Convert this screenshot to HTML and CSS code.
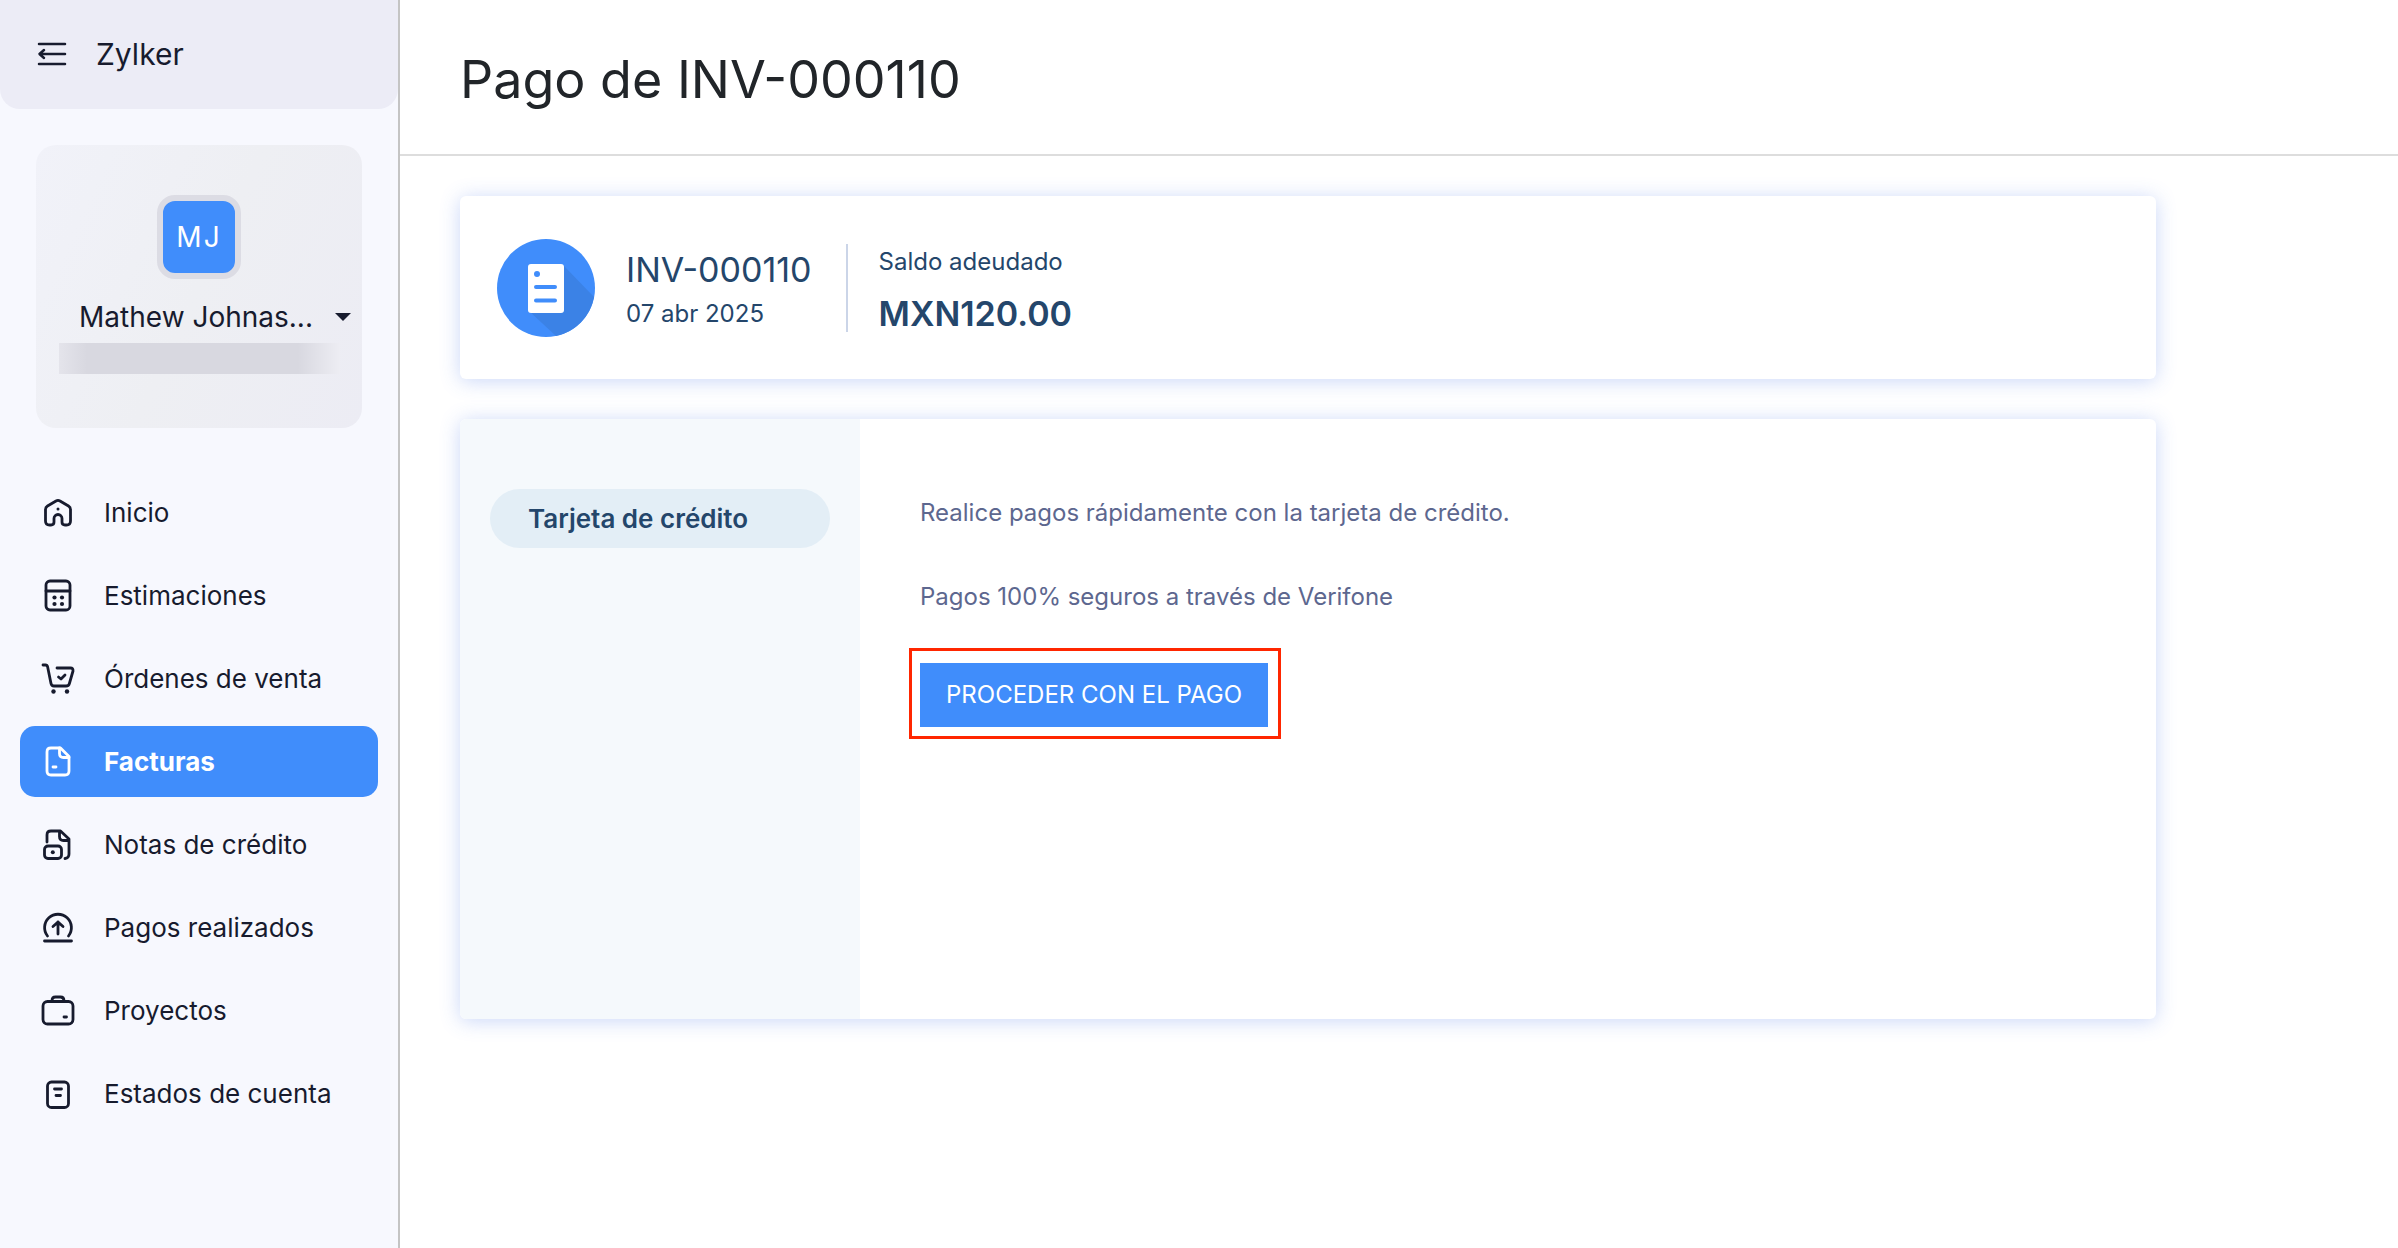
FILE: index.html
```html
<!DOCTYPE html>
<html lang="es">
<head>
    <meta charset="UTF-8">
    <meta name="viewport" content="width=device-width, initial-scale=1.0">
    <title>Pago de INV-000110</title>
    <link rel="stylesheet" href="styles.css">
</head>
<body>
<div id="app">
    <aside id="sidebar">
        <div class="brand">
            <button class="collapse" type="button" aria-label="Contraer menú">
                <svg width="30" height="26" viewBox="0 0 30 26">
                    <path d="M2 3h26M3 13h25M2 23h26M7 9l-4.500 4 4.500 4"/>
                </svg>
            </button>
            <span class="brand-name">Zylker</span>
        </div>

        <div class="profile">
            <div class="avatar">MJ</div>
            <button class="user" type="button">
                <span class="user-name">Mathew Johnas...</span>
                <span class="caret"></span>
            </button>
            <div class="user-mail"></div>
        </div>

        <nav class="menu">
            <a href="#">
                <svg class="icon" viewBox="0 1 36 36">
                    <path d="M16 7 7.500 12Q5.500 13.200 5.500 15.500V27q0 4 4 4h1.500q3 0 3-3v-3.500a4 4 0 0 1 8 0V28q0 3 3 3h1.500q4 0 4-4V15.500q0-2.300-2-3.500L20 7q-2-1.200-4 0z"/>
                    <circle class="dot" cx="18" cy="15" r="1.500"/>
                </svg>
                Inicio
            </a>
            <a href="#">
                <svg class="icon" viewBox="0 1 36 36">
                    <rect x="6" y="4" width="24" height="29" rx="4"/>
                    <path d="M6 14h24"/>
                    <circle class="dot" cx="14.500" cy="20.500" r="2.100"/>
                    <circle class="dot" cx="22" cy="20.500" r="2.100"/>
                    <circle class="dot" cx="14.500" cy="27" r="2.100"/>
                    <circle class="dot" cx="22" cy="27" r="2.100"/>
                </svg>
                Estimaciones
            </a>
            <a href="#">
                <svg class="icon" viewBox="0 1 36 36">
                    <path d="M3 5h2.500q1.700 0 2.100 1.800L11 23.500q.5 2.500 3 2.500h12q3 0 3.400-2.500L33 11q.3-3-2.500-3H17"/>
                    <path d="m18.500 17 2.500 2 4-4"/>
                    <circle class="dot" cx="13.500" cy="31.500" r="2.200"/>
                    <circle class="dot" cx="27" cy="31.500" r="2.200"/>
                </svg>
                Órdenes de venta
            </a>
            <a class="active" href="#" aria-current="page">
                <svg class="icon" viewBox="0 1 36 36">
                    <path d="M11 5h9.500L29 13.500V28q0 4-4 4H11q-4 0-4-4V9q0-4 4-4z"/>
                    <path d="M19.500 5v5.500q0 4 4 4H29M13 24h3"/>
                </svg>
                Facturas
            </a>
            <a href="#">
                <svg class="icon" viewBox="0 1 36 36">
                    <path d="M7 16V9q0-4 4-4h9.500L29 13v15q0 4-4 4.500M19.500 5v5.500q0 4 4 4H29"/>
                    <rect x="4.500" y="20" width="17" height="12.500" rx="3.500"/>
                    <circle class="dot" cx="12.800" cy="26.200" r="2"/>
                </svg>
                Notas de crédito
            </a>
            <a href="#">
                <svg class="icon" viewBox="0 1 36 36">
                    <path d="M7.500 27a13.400 13.400 0 1 1 21 0M4.500 32h27M18 25V13M13 17.500l5-4.500 5 4.500"/>
                </svg>
                Pagos realizados
            </a>
            <a href="#">
                <svg class="icon" viewBox="0 1 36 36">
                    <rect x="3" y="9.500" width="30" height="22.500" rx="4.500"/>
                    <path d="M12 9q0-4 3.500-4h5q3.500 0 3.500 4M24 25h2.500"/>
                </svg>
                Proyectos
            </a>
            <a href="#">
                <svg class="icon" viewBox="0 1 36 36">
                    <rect x="7.500" y="7" width="21" height="25.500" rx="4"/>
                    <path d="M14.500 14h7M16 20.500h4.500"/>
                </svg>
                Estados de cuenta
            </a>
        </nav>
    </aside>

    <main id="main">
        <header class="page-header">
            <h1>Pago de INV-000110</h1>
        </header>
        <div class="page-content">
            <section class="card invoice">
                <svg class="invoice-icon" width="98" height="98" viewBox="0 0 98 98">
                    <circle cx="49" cy="49" r="49" fill="#408dfb"/>
                    <path d="M66 26 97 58A49 49 0 0 1 59 97L32 72z" fill="#3b82e6"/>
                    <rect x="31" y="25" width="36" height="49" rx="3" fill="#fff"/>
                    <circle cx="40" cy="35" r="3" fill="#408dfb"/>
                    <path d="M39 48h19M39 61.500h19" stroke="#408dfb" stroke-width="4" stroke-linecap="round"/>
                </svg>
                <div class="invoice-id">
                    <div class="large">INV-000110</div>
                    <div class="small">07 abr 2025</div>
                </div>
                <div class="balance">
                    <div class="small">Saldo adeudado</div>
                    <div class="amount">MXN120.00</div>
                </div>
            </section>

            <section class="card payment">
                <div class="methods">
                    <button class="method" type="button">Tarjeta de crédito</button>
                </div>
                <div class="method-detail">
                    <p>Realice pagos rápidamente con la tarjeta de crédito.</p>
                    <p>Pagos 100% seguros a través de Verifone</p>
                    <div class="highlight">
                        <button class="pay" type="button">PROCEDER CON EL PAGO</button>
                    </div>
                </div>
            </section>
        </div>
    </main>
</div>
</body>
</html>
```
FILE: styles.css
```css
* {
    margin: 0;
    padding: 0;
    box-sizing: border-box;
}

body {
    font-family: Inter, "Liberation Sans", sans-serif;
    font-size: 24px;
    color: #212529;
    background: #fff;
}

button {
    font: inherit;
    color: inherit;
    border: 0;
    background: none;
    cursor: pointer;
}

#app {
    display: flex;
    min-height: 100vh;
}

/* sidebar */
#sidebar {
    flex: 0 0 400px;
    border-right: 2px solid #c4c4c4;
    background: #f7f8fe;
    color: #171b2e;
}

.brand {
    display: flex;
    align-items: center;
    gap: 29px;
    height: 109px;
    padding: 0 0 1px 37px;
    border-radius: 0 0 20px 20px;
    background: #ececf6;
    font-size: 30px;
}

.collapse svg {
    display: block;
    fill: none;
    stroke: currentColor;
    stroke-width: 2.5;
    stroke-linecap: round;
    stroke-linejoin: round;
}

.profile {
    display: flex;
    flex-direction: column;
    align-items: center;
    height: 283px;
    margin: 36px 36px 49px;
    padding-top: 50px;
    border-radius: 20px;
    background: linear-gradient(115deg, #f1f2f9, #eeeff3 50%, #ececf4);
}

.avatar {
    width: 84px;
    height: 84px;
    border: 6px solid #dcdce4;
    border-radius: 18px;
    background: #408dfb;
    color: #fff;
    font-size: 28px;
    letter-spacing: 2px;
    line-height: 72px;
    text-align: center;
}

.user {
    display: flex;
    align-items: center;
    align-self: flex-end;
    gap: 22px;
    margin: 20px 11px 8px 0;
    font-size: 28px;
    line-height: 36px;
}

.caret {
    border: 8px solid transparent;
    border-top-color: currentColor;
    border-bottom: 0;
}

.user-mail {
    width: 281px;
    height: 31px;
    background: linear-gradient(90deg, #e4e4eb, #d8d8e0 10%, #d8d8e0 85%, #ededf3);
}

.menu {
    display: flex;
    flex-direction: column;
    gap: 12px;
    padding: 0 20px;
}

.menu a {
    display: flex;
    align-items: center;
    gap: 28px;
    height: 71px;
    padding-left: 20px;
    border-radius: 15px;
    color: inherit;
    font-size: 26px;
    text-decoration: none;
}

.menu .active {
    background: #408dfb;
    color: #fff;
    font-weight: 700;
}

.icon {
    width: 36px;
    height: 36px;
    fill: none;
    stroke: currentColor;
    stroke-width: 2.8;
    stroke-linecap: round;
    stroke-linejoin: round;
}

.icon .dot {
    fill: currentColor;
    stroke: none;
}

/* main area */
#main {
    flex: 1;
    min-width: 0;
}

.page-header {
    padding: 48px 60px 42px;
    border-bottom: 2px solid #ddd;
}

.page-header h1 {
    font-size: 52px;
    font-weight: 400;
    line-height: 64px;
}

.page-content {
    display: flex;
    flex-direction: column;
    gap: 40px;
    padding: 40px 242px 60px 60px;
}

.card {
    display: flex;
    border-radius: 6px;
    background: #fff;
    box-shadow: 0 2px 20px rgba(64, 113, 230, 0.28);
    overflow: hidden;
}

.invoice {
    align-items: center;
    padding: 43px 37px 42px;
    color: #24466b;
}

.invoice-id {
    margin: 0 34px 0 31px;
}

.large {
    font-size: 34px;
    line-height: 52px;
}

.small {
    line-height: 36px;
}

.balance {
    padding-left: 31px;
    border-left: 2px solid #cbd5e8;
}

.amount {
    margin-top: 16px;
    font-size: 34px;
    font-weight: 600;
    line-height: 36px;
}

.payment {
    min-height: 600px;
}

.methods {
    flex: 0 0 400px;
    padding: 70px 30px;
    background: #f5f9fc;
}

.method {
    width: 100%;
    padding-left: 38px;
    border-radius: 30px;
    background: #e3eef6;
    color: #24466b;
    font-size: 26px;
    font-weight: 600;
    line-height: 59px;
    text-align: left;
}

.method-detail {
    flex: 1;
    padding: 76px 60px;
    color: #5d678f;
}

.method-detail p {
    margin-bottom: 48px;
    line-height: 36px;
}

.highlight {
    display: inline-block;
    margin-left: -11px;
    margin-top: -15px;
    padding: 12px 10px 9px 8px;
    border: 3px solid #ff2600;
}

.pay {
    display: block;
    padding: 0 26px;
    background: #408dfb;
    color: #fff;
    line-height: 64px;
}
```
